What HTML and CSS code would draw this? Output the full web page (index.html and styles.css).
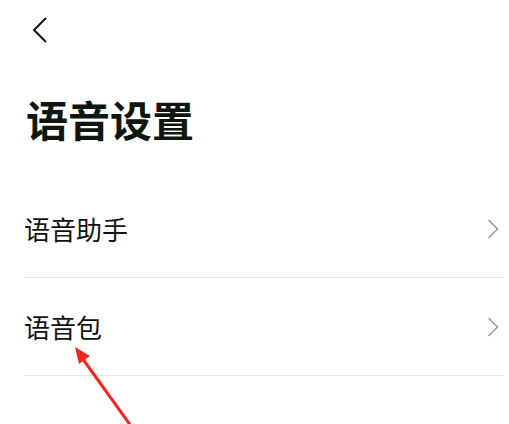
FILE: index.html
```html
<!DOCTYPE html>
<html lang="zh">
<head>
<meta charset="utf-8">
<link rel="stylesheet" href="styles.css">
</head>
<body>
<div class="page">
  <div class="topbar">
    <svg class="back" width="16" height="28" viewBox="0 0 16 28"><path d="M14 2 L2 14 L14 26" fill="none" stroke="#111" stroke-width="2"/></svg>
  </div>
  <h1 class="title">语音设置</h1>
  <ul class="list">
    <li class="row"><span class="label">语音助手</span><svg class="chev" width="12" height="20" viewBox="0 0 12 20"><path d="M1.5 1 L10.5 10 L1.5 19" fill="none" stroke="#9a9a9a" stroke-width="1.5"/></svg></li>
    <li class="row"><span class="label">语音包</span><svg class="chev" width="12" height="20" viewBox="0 0 12 20"><path d="M1.5 1 L10.5 10 L1.5 19" fill="none" stroke="#9a9a9a" stroke-width="1.5"/></svg></li>
  </ul>
  <svg class="arrow" width="509" height="424" viewBox="0 0 509 424">
    <line x1="131" y1="426" x2="80" y2="355" stroke="#f2261c" stroke-width="3"/>
    <polygon points="75,347 90,356 79,364" fill="#f2261c"/>
  </svg>
</div>
</body>
</html>
```
FILE: styles.css
```css
html, body {
  margin: 0;
  padding: 0;
  background: #ffffff;
}
body {
  font-family: "Noto Sans CJK SC", "Noto Sans", sans-serif;
  color: #111;
}
.page {
  position: relative;
  width: 509px;
  height: 424px;
  overflow: hidden;
}
.topbar {
  padding: 16px 0 0 32px;
  height: 28px;
}
.back {
  display: block;
}
.title {
  margin: 51px 0 0 26px;
  font-size: 42px;
  line-height: 48px;
  font-weight: 700;
  color: #0d170d;
}
.list {
  list-style: none;
  margin: 37px 5px 0 24px;
  padding: 0;
}
.row {
  display: flex;
  align-items: center;
  justify-content: space-between;
  height: 97px;
  border-bottom: 1px solid #e6e6e6;
}
.label {
  font-size: 26px;
  line-height: 30px;
  color: #111;
}
.chev {
  display: block;
  margin-right: 5px;
}
.arrow {
  position: absolute;
  left: 0;
  top: 0;
}
```
